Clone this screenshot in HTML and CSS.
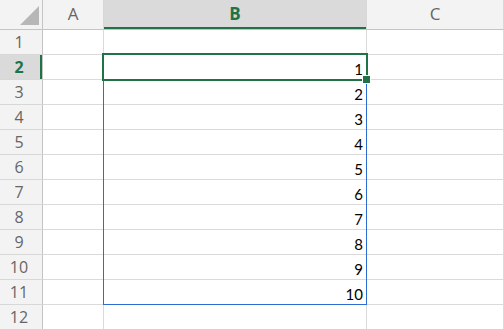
FILE: index.html
```
<!DOCTYPE html>
<html lang="en">
<head>
    <meta charset="UTF-8" />
    <title>Sheet</title>
    <link rel="stylesheet" href="styles.css">
</head>
<body>
    <div class="sheet">
        <div class="corner">
            <svg width="42" height="29" viewBox="0 0 42 29"><polygon points="39,6 39,25 20,25" fill="#b7b7b7"/></svg>
        </div>
        <div class="col-head">A</div>
        <div class="col-head active">B</div>
        <div class="col-head">C</div>

        <div class="row-head">1</div><div class="cell"></div><div class="cell"></div><div class="cell"></div>
        <div class="row-head active">2</div><div class="cell"></div><div class="cell num">1</div><div class="cell"></div>
        <div class="row-head">3</div><div class="cell"></div><div class="cell num">2</div><div class="cell"></div>
        <div class="row-head">4</div><div class="cell"></div><div class="cell num">3</div><div class="cell"></div>
        <div class="row-head">5</div><div class="cell"></div><div class="cell num">4</div><div class="cell"></div>
        <div class="row-head">6</div><div class="cell"></div><div class="cell num">5</div><div class="cell"></div>
        <div class="row-head">7</div><div class="cell"></div><div class="cell num">6</div><div class="cell"></div>
        <div class="row-head">8</div><div class="cell"></div><div class="cell num">7</div><div class="cell"></div>
        <div class="row-head">9</div><div class="cell"></div><div class="cell num">8</div><div class="cell"></div>
        <div class="row-head">10</div><div class="cell"></div><div class="cell num">9</div><div class="cell"></div>
        <div class="row-head">11</div><div class="cell"></div><div class="cell num">10</div><div class="cell"></div>
        <div class="row-head">12</div><div class="cell"></div><div class="cell"></div><div class="cell"></div>

        <!-- selection overlays -->
        <div class="range"></div>
        <div class="active-cell"></div>
        <div class="fill-handle"></div>
    </div>
</body>
</html>
```

FILE: styles.css
```
body {
    margin: 0;
    background-color: #ffffff;
    width: 504px;
    height: 329px;
    overflow: hidden;
}

.sheet {
    position: relative;
    display: grid;
    grid-template-columns: 43px 61px 263px 137px;
    grid-template-rows: 30px repeat(12, 25px);
    font-family: "Open Sans", "Noto Sans", sans-serif;
}

.sheet > div {
    box-sizing: border-box;
}

.corner {
    background-color: #f3f3f3;
    border-right: 1px solid #c4c4c4;
    border-bottom: 1px solid #c4c4c4;
}

.corner svg {
    display: block;
}

.col-head {
    background-color: #f3f3f3;
    border-right: 1px solid #d8d8d8;
    border-bottom: 1px solid #c4c4c4;
    color: #666666;
    font-size: 17px;
    display: flex;
    align-items: center;
    justify-content: center;
    padding-bottom: 2px;
}

.col-head.active {
    background-color: #dadada;
    color: #217346;
    font-weight: bold;
    box-shadow: inset 0 -2px 0 #217346;
}

.row-head {
    background-color: #f3f3f3;
    border-right: 1px solid #c4c4c4;
    border-bottom: 1px solid #d8d8d8;
    color: #666666;
    font-size: 16px;
    display: flex;
    align-items: center;
    justify-content: center;
    padding-right: 4px;
}

.row-head.active {
    background-color: #dadada;
    color: #217346;
    font-weight: bold;
    box-shadow: inset -2px 0 0 #217346;
}

.cell {
    border-right: 1px solid #dadada;
    border-bottom: 1px solid #dadada;
}

.num {
    font-family: Lato, "Liberation Sans", sans-serif;
    font-size: 15px;
    line-height: 18px;
    color: #000000;
    display: flex;
    align-items: flex-end;
    justify-content: flex-end;
    padding-right: 3px;
    padding-bottom: 1px;
}

.range {
    position: absolute;
    left: 103px;
    top: 54px;
    width: 264px;
    height: 251px;
    border: 1px solid #2b6dd1;
}

.active-cell {
    position: absolute;
    left: 102px;
    top: 53px;
    width: 266px;
    height: 28px;
    border: 2px solid #217346;
}

.fill-handle {
    position: absolute;
    left: 362px;
    top: 75px;
    width: 9px;
    height: 9px;
    background-color: #217346;
    border: 1px solid #ffffff;
}
```
